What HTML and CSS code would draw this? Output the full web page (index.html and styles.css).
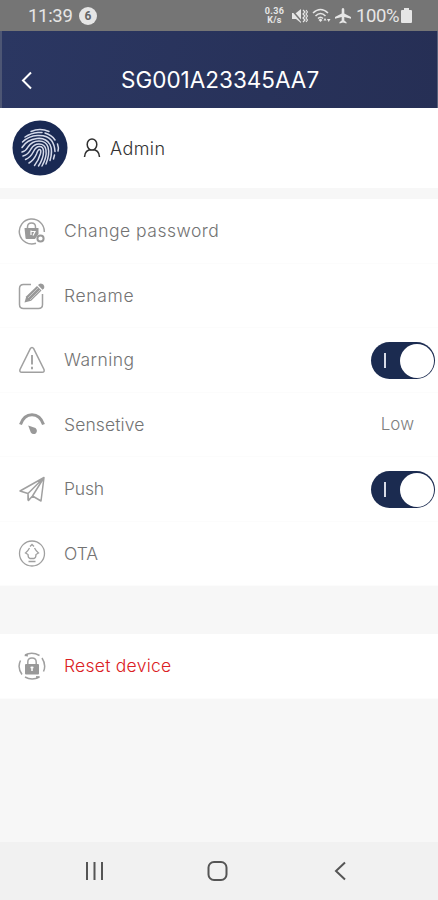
FILE: index.html
```html
<!DOCTYPE html>
<html lang="en">
<head>
  <meta charset="UTF-8" />
  <meta name="viewport" content="width=device-width, initial-scale=1">
  <title>Device settings</title>
  <link rel="stylesheet" href="styles.css">
</head>
<body>
  <div class="status-bar">
    <span class="time">11:39</span>
    <span class="badge">6</span>
    <span class="speed">0.36<br>K/s</span>
    <svg class="mute" width="17" height="18" viewBox="0 0 17 18">
      <path d="M1 6h4l5-4v14l-5-4H1z" fill="#e6e6e6"/>
      <path d="M0 2l12 14" stroke="#757575" stroke-width="1.5"/>
      <path d="M12 3l2 2-2 2 2 2-2 2 2 2-2 2M15 3l1.5 2L15 7l1.500 2-1.500 2 1.500 2-1.500 2" fill="none" stroke="#e6e6e6" stroke-width="1.200"/>
    </svg>
    <svg class="wifi" width="19" height="16" viewBox="0 0 19 16">
      <path d="M1 5q7.500-7 15 0M3.500 8q5-5 10 0M6 10.500q2.500-2.500 5 0" fill="none" stroke="#e6e6e6" stroke-width="1.600"/>
      <path d="M6.500 12l2-1.500 2 1.500-2 2zM11.500 12.500l1.500-2.500 1.500 2.500zM15 11h3.500L16.700 14z" fill="#e6e6e6"/>
    </svg>
    <svg class="plane" width="16" height="16" viewBox="0 0 16 16">
      <path d="M8 0c.9 0 1.300.9 1.300 2v3.500L16 9v1.800L9.300 9v3.500l2.200 1.700v1.300L8 14.600l-3.500.9v-1.300l2.200-1.700V9L0 10.800V9l6.700-3.500V2C6.700.9 7.100 0 8 0z" fill="#e6e6e6"/>
    </svg>
    <span class="percent">100%</span>
    <svg class="battery" width="11" height="15" viewBox="0 0 11 15">
      <path d="M3 0h5v2h2q1 0 1 1v11q0 1-1 1H1q-1 0-1-1V3q0-1 1-1h2z" fill="#e6e6e6"/>
    </svg>
  </div>

  <header class="header">
    <svg class="back" width="12" height="19" viewBox="0 0 12 19"><path d="M10 1.500L2 9.500l8 8" fill="none" stroke="#fff" stroke-width="2"/></svg>
    <h1>SG001A23345AA7</h1>
  </header>

  <section class="user">
    <svg class="finger" width="56" height="56" viewBox="0 0 56 56">
      <circle cx="28" cy="28" r="27.500" fill="#192953"/>
      <g fill="none" stroke="#d5daea" stroke-width="1.500" stroke-linecap="round">
        <path d="M19 11.500q9-4 18 0M13 17q6-4 13-4.500h4M33 13q7 2 10 7"/>
        <path d="M10.500 22q6-6 15-6.500 10-.5 14 5 3 4 3.500 11"/>
        <path d="M45.500 24q1.500 4 .5 7"/>
        <path d="M10 27.500q5-8 15-9 9-1 13 6 3 6 0 16"/>
        <path d="M10 32q4-1 6-5 4-6 11-6 7 0 9 6 2 7-2 17"/>
        <path d="M11 36q5-1 8-7 3-5 8-5 6 0 7 6 1 7-4 16"/>
        <path d="M13.500 39.500q5-2 8-8 2.500-5 6-5 4 0 4 5 0 7-5 14.500"/>
        <path d="M17 43q5-3 7.500-9 1.500-4.500 3-4.500 2 0 1 4-2 7-6 12"/>
        <path d="M42.500 35l-1 4"/>
      </g>
    </svg>
    <svg class="person" width="18" height="20" viewBox="0 0 18 20">
      <path d="M1.500 19c.3-5 3-7.500 7.500-7.500s7.200 2.500 7.500 7.500" fill="none" stroke="#303030" stroke-width="1.500"/>
      <ellipse cx="9" cy="6.500" rx="4.800" ry="5.500" fill="#fff" stroke="#303030" stroke-width="1.500"/>
    </svg>
    <span class="user-name">Admin</span>
  </section>

  <main class="list">
    <div class="row">
      <svg class="icon" viewBox="0 0 28 28">
        <path d="M26.300 15A12.500 12.500 0 1 0 18 26.300" class="line"/>
        <path d="M9.500 12V10q0-4 4-4t4 4V12" class="line"/>
        <path d="M6.500 11h14v6l-3.500 5H8.500q-1 0-1-1z" class="solid"/>
        <path d="M13 13.500v4.500M13 14.500h4l-2 4" fill="none" stroke="#fff" stroke-width="1.200"/>
        <circle cx="22.500" cy="21.500" r="3.100" fill="#fff" stroke="#999" stroke-width="2"/>
      </svg>
      <span class="label change">Change password</span>
    </div>
    <div class="row">
      <svg class="icon rename-icon" viewBox="0 0 28 28">
        <path d="M13 2.500H5.500q-4 0-4 4v16q0 4 4 4h15q4 0 4-4V12" class="line"/>
        <path d="M6.500 20.500l1.800-6.200L19 4l4.500 4.500L13.200 18.700z" class="solid"/>
        <path d="M20 3q2-2.500 4.500-1T26 6.500l-1.500 1.300z" class="solid"/>
        <path d="M10 16l10-10M12 18L22 8" stroke="#ddd" stroke-width=".7"/>
      </svg>
      <span class="label rename">Rename</span>
    </div>
    <div class="row">
      <svg class="icon" viewBox="0 0 28 28">
        <path d="M12.200 2.800q1.800-2.500 3.600 0L26 23.500q.8 2.800-1.800 2.800H3.800Q1.200 26.300 2 23.500z" class="line"/>
        <path d="M14 9v9.500M14 20.800v2.500" stroke="#a5a5a5" stroke-width="2"/>
      </svg>
      <span class="label warning">Warning</span>
      <span class="switch"></span>
    </div>
    <div class="row">
      <svg class="icon" viewBox="0 0 28 28">
        <path d="M2.500 14.500C7 1.500 21 1.500 25.500 14.500" fill="none" stroke="#999" stroke-width="3"/>
        <path d="M10.200 15.500l7.300 2.500q2.500 2.500.5 5.200-3 2-5.200-.7z" class="solid"/>
      </svg>
      <span class="label sensitive">Sensetive</span>
      <span class="value">Low</span>
    </div>
    <div class="row">
      <svg class="icon" viewBox="0 0 28 28">
        <path d="M2 16L26 2.500l-3 23.500-8.500-5-4 4.500-.5-7zM26 2.500L10 18.500v7M26 2.500L14.500 21" class="line" stroke-linejoin="round"/>
      </svg>
      <span class="label push">Push</span>
      <span class="switch"></span>
    </div>
    <div class="row">
      <svg class="icon" viewBox="0 0 28 28">
        <circle cx="14" cy="14.500" r="12.500" class="line thin"/>
        <path d="M12 7.500l2-2 2 2M11.500 9Q10 12 7.500 14l2.500 1.500q0 3.500 2 4h4q2-.5 2-4l2.500-1.500Q18 12 16.500 9M10.500 22.500h7" class="line thin"/>
      </svg>
      <span class="label ota">OTA</span>
    </div>
  </main>

  <section class="reset">
    <div class="row">
      <svg class="icon" viewBox="0 0 28 28">
        <path d="M7 3Q14-.5 21.500 3.500M24 6q4.500 7 1.500 13.500M21.500 25Q14 29 7 25M4 22.500Q-1 15.500 2.500 8.500" class="line"/>
        <path d="M6 4l3.500-2.500.5 3zM22 24.500l-3.500 2.500-.5-3z" class="solid"/>
        <path d="M9.800 12.500V10q0-4 4.200-4t4.200 4v2.500" class="line"/>
        <rect x="7" y="12" width="14" height="10.500" rx="1" class="solid"/>
        <path d="M14 14.500v4.500M12.500 15.500h3" stroke="#fff" stroke-width="1.500"/>
      </svg>
      <span class="label danger">Reset device</span>
    </div>
  </section>

  <nav class="nav">
    <svg width="20" height="20" viewBox="0 0 20 20"><path d="M2 1v18M9.500 1v18M17 1v18" stroke="#555" stroke-width="2"/></svg>
    <svg width="22" height="22" viewBox="0 0 22 22"><rect x="1.500" y="2" width="18" height="18" rx="5.500" fill="none" stroke="#555" stroke-width="2"/></svg>
    <svg width="20" height="20" viewBox="0 0 20 20"><path d="M15 1.500L6 10l9 8.500" fill="none" stroke="#555" stroke-width="2"/></svg>
  </nav>
</body>
</html>
```
FILE: styles.css
```css
* {
  box-sizing: border-box;
}
body {
  margin: 0;
  height: 900px;
  display: flex;
  flex-direction: column;
  overflow: hidden;
  background: #f7f7f7;
  font-family: Inter, sans-serif;
}
svg, span {
  flex-shrink: 0;
}
.status-bar {
  height: 31px;
  display: flex;
  align-items: center;
  padding-left: 28px;
  background: #757575;
  color: #e6e6e6;
  font-family: Roboto, sans-serif;
  font-size: 18.500px;
}
.time {
  width: 51px;
  letter-spacing: -0.3px;
}
.badge {
  width: 18px;
  height: 18px;
  border-radius: 50%;
  background: #e6e6e6;
  color: #666;
  font-size: 12px;
  font-weight: bold;
  line-height: 18px;
  text-align: center;
}
.speed {
  width: 21px;
  margin-left: 167px;
  font-size: 9px;
  font-weight: bold;
  line-height: 9px;
  letter-spacing: 0.3px;
  text-align: center;
}
.mute {
  margin-left: 6px;
}
.wifi {
  margin-left: 4px;
}
.plane {
  margin-left: 4px;
}
.percent {
  width: 45px;
  margin-left: 5px;
  letter-spacing: -0.4px;
  white-space: nowrap;
}
.header {
  height: 77px;
  display: flex;
  align-items: center;
  padding: 22px 0 0 19px;
  background: linear-gradient(100deg, #2b3762, #262f55);
  border-left: 2px solid #4d5674;
  border-right: 1px solid #59617a;
  color: #fff;
}
h1 {
  margin: -2px 0 0 88px;
  font-size: 22.500px;
  font-weight: 400;
  white-space: nowrap;
}
.user {
  height: 80px;
  display: flex;
  align-items: center;
  padding-left: 12px;
  background: #fff;
}
.person {
  margin-left: 15px;
}
.user-name {
  margin-left: 9px;
  color: #333;
  font-size: 18px;
  font-weight: 300;
  letter-spacing: 0.4px;
}
.list {
  margin-top: 11px;
}
.row {
  height: 64.500px;
  display: flex;
  align-items: center;
  padding-left: 18px;
  background: #fff;
  border-bottom: 1px solid #fcfcfc;
}
.icon {
  width: 28px;
  height: 28px;
}
.rename-icon {
  margin-top: 2px;
}
.line {
  fill: none;
  stroke: #a0a0a0;
  stroke-width: 1.500;
}
.thin {
  stroke-width: 1.300;
}
.solid {
  fill: #999;
}
.label {
  margin-left: 18px;
  color: #737373;
  font-size: 17.500px;
  font-weight: 300;
}
.change {
  letter-spacing: 0.5px;
}
.rename {
  letter-spacing: 0.65px;
}
.warning {
  letter-spacing: 0.45px;
}
.sensitive {
  letter-spacing: 0.1px;
}
.push {
  letter-spacing: -0.2px;
}
.danger {
  color: #db2023;
  letter-spacing: 0.25px;
}
.switch {
  width: 64px;
  height: 37px;
  position: relative;
  margin: 2px 3px 0 auto;
  border-radius: 19px;
  background: #1b2b50;
}
.switch::before {
  content: "";
  position: absolute;
  left: 13px;
  top: 11px;
  width: 1.500px;
  height: 15px;
  background: #d7dbe6;
}
.switch::after {
  content: "";
  position: absolute;
  right: 1px;
  top: 1.500px;
  width: 34px;
  height: 34px;
  border-radius: 50%;
  background: #fff;
}
.value {
  margin-left: auto;
  margin-right: 24px;
  color: #808080;
  font-size: 17px;
  font-weight: 300;
}
.reset {
  margin-top: 48px;
}
.nav {
  height: 58px;
  margin-top: auto;
  display: flex;
  align-items: center;
  justify-content: space-between;
  padding: 0 88px 0 85px;
  background: #f1f1f1;
}
```
